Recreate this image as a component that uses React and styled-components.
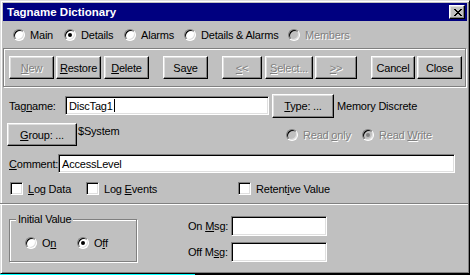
import React from "react";
import styled, { createGlobalStyle } from "styled-components";

const Global = createGlobalStyle`
  html, body {
    margin: 0;
    padding: 0;
    background: #000;
  }
  body {
    font-family: "Liberation Sans", Arial, sans-serif;
    font-size: 11px;
    letter-spacing: -0.2px;
    color: #000;
  }
`;

const Window = styled.div`
  width: 470px;
  height: 274px;
  box-sizing: border-box;
  background: #c0c0c0;
  border: 1px solid;
  border-color: #dfdfdf #000 #000 #dfdfdf;
  box-shadow: inset 1px 1px #fff, inset -1px -1px #808080;
  padding: 2px;
  display: flex;
  flex-direction: column;
`;

const TitleBar = styled.div`
  height: 18px;
  flex: none;
  background: #000080;
  display: flex;
  align-items: center;
  justify-content: space-between;
  padding-left: 4px;
  padding-right: 2px;
`;

const TitleText = styled.span`
  color: #fff;
  font-weight: bold;
  font-size: 11.5px;
  letter-spacing: 0;
`;

const CloseButton = styled.div`
  width: 16px;
  height: 14px;
  box-sizing: border-box;
  background: #c0c0c0;
  border: 1px solid;
  border-color: #fff #000 #000 #fff;
  box-shadow: inset -1px -1px #808080, inset 1px 1px #dfdfdf;
  display: flex;
  align-items: center;
  justify-content: center;
  padding-left: 1px;
`;

const TabRow = styled.div`
  display: flex;
  align-items: center;
  height: 14px;
  padding: 7px 0 6px 10px;
`;

const RadioItem = styled.div`
  display: flex;
  align-items: center;
  gap: 5px;
  width: ${(p) => (p.$w ? `${p.$w}px` : "auto")};
  height: 14px;
  flex: none;
`;

const Radio = styled.span`
  width: 12px;
  height: 12px;
  box-sizing: border-box;
  border-radius: 50%;
  border: 1px solid;
  border-color: #808080 #fff #fff #808080;
  box-shadow: inset 1px 1px #000, inset -1px -1px #dfdfdf;
  background: ${(p) => (p.$disabled ? "#c0c0c0" : "#fff")};
  display: flex;
  align-items: center;
  justify-content: center;
  flex: none;

  &::after {
    content: "";
    width: 4px;
    height: 4px;
    border-radius: 50%;
    background: ${(p) => (p.$disabled ? "#808080" : "#000")};
    display: ${(p) => (p.$checked ? "block" : "none")};
  }
`;

const Caption = styled.span`
  white-space: nowrap;
  color: ${(p) => (p.$disabled ? "#808080" : "#000")};
  text-shadow: ${(p) => (p.$disabled ? "1px 1px #fff" : "none")};
`;

const Toolbar = styled.div`
  width: 463px;
  height: 39px;
  box-sizing: border-box;
  flex: none;
  border: 1px solid #808080;
  box-shadow: inset 1px 1px #fff, 1px 1px #fff;
  padding: 7px 0 0 5px;
  display: flex;
  align-items: flex-start;
`;

const Button = styled.div`
  width: ${(p) => p.$w}px;
  height: ${(p) => p.$h || 23}px;
  margin-left: ${(p) => p.$ml || 0}px;
  box-sizing: border-box;
  flex: none;
  background: #c0c0c0;
  border: 1px solid;
  border-color: #fff #000 #000 #fff;
  box-shadow: inset -1px -1px #808080, inset 1px 1px #dfdfdf;
  display: flex;
  align-items: center;
  justify-content: center;
  white-space: nowrap;
  color: ${(p) => (p.$disabled ? "#808080" : "#000")};
  text-shadow: ${(p) => (p.$disabled ? "1px 1px #fff" : "none")};
`;

const DetailsPanel = styled.div`
  display: flex;
  flex-direction: column;
  padding-left: 4px;
  height: 116px;
  flex: none;
`;

const Row = styled.div`
  display: flex;
  align-items: ${(p) => p.$align || "center"};
  height: ${(p) => p.$h}px;
  margin-top: ${(p) => p.$mt}px;
  flex: none;
`;

const FieldLabel = styled.span`
  width: ${(p) => p.$w}px;
  margin-left: ${(p) => p.$ml || 0}px;
  flex: none;
  white-space: nowrap;
`;

const Field = styled.div`
  width: ${(p) => p.$w}px;
  height: ${(p) => p.$h || 19}px;
  box-sizing: border-box;
  flex: none;
  background: #fff;
  border: 1px solid;
  border-color: #808080 #fff #fff #808080;
  box-shadow: inset 1px 1px #000, inset -1px -1px #dfdfdf;
  display: flex;
  align-items: center;
  padding-left: 3px;
  white-space: nowrap;
`;

const Caret = styled.span`
  width: 1px;
  height: 13px;
  background: #000;
  margin-left: 1px;
`;

const InfoText = styled.span`
  width: ${(p) => (p.$w ? `${p.$w}px` : "auto")};
  margin-left: ${(p) => p.$ml || 0}px;
  padding-top: ${(p) => p.$pt || 0}px;
  flex: none;
  white-space: nowrap;
`;

const SideRadios = styled.div`
  display: flex;
  align-self: center;
`;

const CheckItem = styled.div`
  display: flex;
  align-items: center;
  gap: 5px;
  width: ${(p) => (p.$w ? `${p.$w}px` : "auto")};
  margin-left: ${(p) => p.$ml || 0}px;
  flex: none;
`;

const CheckBox = styled.span`
  width: 13px;
  height: 13px;
  box-sizing: border-box;
  flex: none;
  background: #fff;
  border: 1px solid;
  border-color: #808080 #fff #fff #808080;
  box-shadow: inset 1px 1px #000, inset -1px -1px #dfdfdf;
`;

const Separator = styled.div`
  height: 0;
  border-top: 1px solid #808080;
  border-bottom: 1px solid #fff;
  margin-left: -3px;
  margin-right: -1px;
  flex: none;
`;

const LowerPanel = styled.div`
  display: flex;
  align-items: flex-start;
  padding-left: 6px;
  flex: 1;
`;

const GroupBox = styled.fieldset`
  margin: 8px 0 0 0;
  width: 128px;
  height: 49px;
  box-sizing: border-box;
  border: 1px solid #808080;
  box-shadow: inset 1px 1px #fff, 1px 1px #fff;
  padding: 0;
`;

const Legend = styled.legend`
  padding: 0 2px;
  margin-left: 6px;
  background: #c0c0c0;
  line-height: 13px;
  position: relative;
  z-index: 1;
`;

const GroupRadios = styled.div`
  display: flex;
  align-items: center;
  padding: 10px 0 0 15px;
`;

const MsgGrid = styled.div`
  display: grid;
  grid-template-columns: 43px 96px;
  grid-auto-rows: 20px;
  row-gap: 6px;
  align-items: center;
  margin: 11px 0 0 51px;
`;

const Strip = styled.div`
  width: 195px;
  height: 1px;
  background: #00ffff;
`;

const closeGlyph = Array.from(
  { length: 7 },
  (_, r) => `M${r} ${r}h2v1h-2z M${6 - r} ${r}h2v1h-2z`
).join(" ");

const tabs = [
  { label: "Main", w: 51 },
  { label: "Details", w: 60, checked: true },
  { label: "Alarms", w: 60 },
  { label: "Details & Alarms", w: 104 },
  { label: "Members", disabled: true },
];

export default function App() {
  return (
    <>
      <Global />
      <Window>
        <TitleBar>
          <TitleText>Tagname Dictionary</TitleText>
          <CloseButton>
            <svg width="8" height="7" viewBox="0 0 8 7" shapeRendering="crispEdges">
              <path d={closeGlyph} fill="#000" />
            </svg>
          </CloseButton>
        </TitleBar>

        <TabRow>
          {tabs.map((t) => (
            <RadioItem key={t.label} $w={t.w}>
              <Radio $checked={t.checked} $disabled={t.disabled} />
              <Caption $disabled={t.disabled}>{t.label}</Caption>
            </RadioItem>
          ))}
        </TabRow>

        <Toolbar>
          <Button $w={45} $disabled>
            <span><u>N</u>ew</span>
          </Button>
          <Button $w={45} $ml={2}>
            <span><u>R</u>estore</span>
          </Button>
          <Button $w={45} $ml={3}>
            <span><u>D</u>elete</span>
          </Button>
          <Button $w={45} $ml={14}>
            <span>Sa<u>v</u>e</span>
          </Button>
          <Button $w={40} $ml={14} $disabled>
            <span><u>&lt;</u>&lt;</span>
          </Button>
          <Button $w={48} $ml={3} $disabled>
            <span><u>S</u>elect...</span>
          </Button>
          <Button $w={42} $ml={2} $disabled>
            <span><u>&gt;</u>&gt;</span>
          </Button>
          <Button $w={44} $ml={14}>Cancel</Button>
          <Button $w={45} $ml={2}>Close</Button>
        </Toolbar>

        <DetailsPanel>
          <Row $mt={6} $h={25}>
            <FieldLabel $w={56} $ml={2}>
              Tag<u>n</u>ame:
            </FieldLabel>
            <Field $w={204}>
              DiscTag1
              <Caret />
            </Field>
            <Button $w={62} $h={24} $ml={3}>
              <span><u>T</u>ype: ...</span>
            </Button>
            <InfoText $ml={3}>Memory Discrete</InfoText>
          </Row>

          <Row $mt={5} $h={23} $align="flex-start">
            <Button $w={70}>
              <span><u>G</u>roup: ...</span>
            </Button>
            <InfoText $w={208} $ml={1} $pt={2}>
              $System
            </InfoText>
            <SideRadios>
              <RadioItem $w={76}>
                <Radio $disabled />
                <Caption $disabled>
                  Read <u>o</u>nly
                </Caption>
              </RadioItem>
              <RadioItem>
                <Radio $disabled $checked />
                <Caption $disabled>
                  Read <u>W</u>rite
                </Caption>
              </RadioItem>
            </SideRadios>
          </Row>

          <Row $mt={8} $h={19}>
            <FieldLabel $w={49} $ml={2}>
              <u>C</u>omment:
            </FieldLabel>
            <Field $w={397}>AccessLevel</Field>
          </Row>

          <Row $mt={9} $h={13}>
            <CheckItem $w={76} $ml={3}>
              <CheckBox />
              <span>
                <u>L</u>og Data
              </span>
            </CheckItem>
            <CheckItem $w={152}>
              <CheckBox />
              <span>
                Log <u>E</u>vents
              </span>
            </CheckItem>
            <CheckItem>
              <CheckBox />
              <span>
                Retent<u>i</u>ve Value
              </span>
            </CheckItem>
          </Row>
        </DetailsPanel>

        <Separator />

        <LowerPanel>
          <GroupBox>
            <Legend>Initial Value</Legend>
            <GroupRadios>
              <RadioItem $w={52}>
                <Radio />
                <span>
                  O<u>n</u>
                </span>
              </RadioItem>
              <RadioItem>
                <Radio $checked />
                <span>
                  O<u>f</u>f
                </span>
              </RadioItem>
            </GroupRadios>
          </GroupBox>

          <MsgGrid>
            <span>
              On <u>M</u>sg:
            </span>
            <Field $w={96} $h={20} />
            <span>
              Off M<u>s</u>g:
            </span>
            <Field $w={96} $h={20} />
          </MsgGrid>
        </LowerPanel>
      </Window>
      <Strip />
    </>
  );
}
